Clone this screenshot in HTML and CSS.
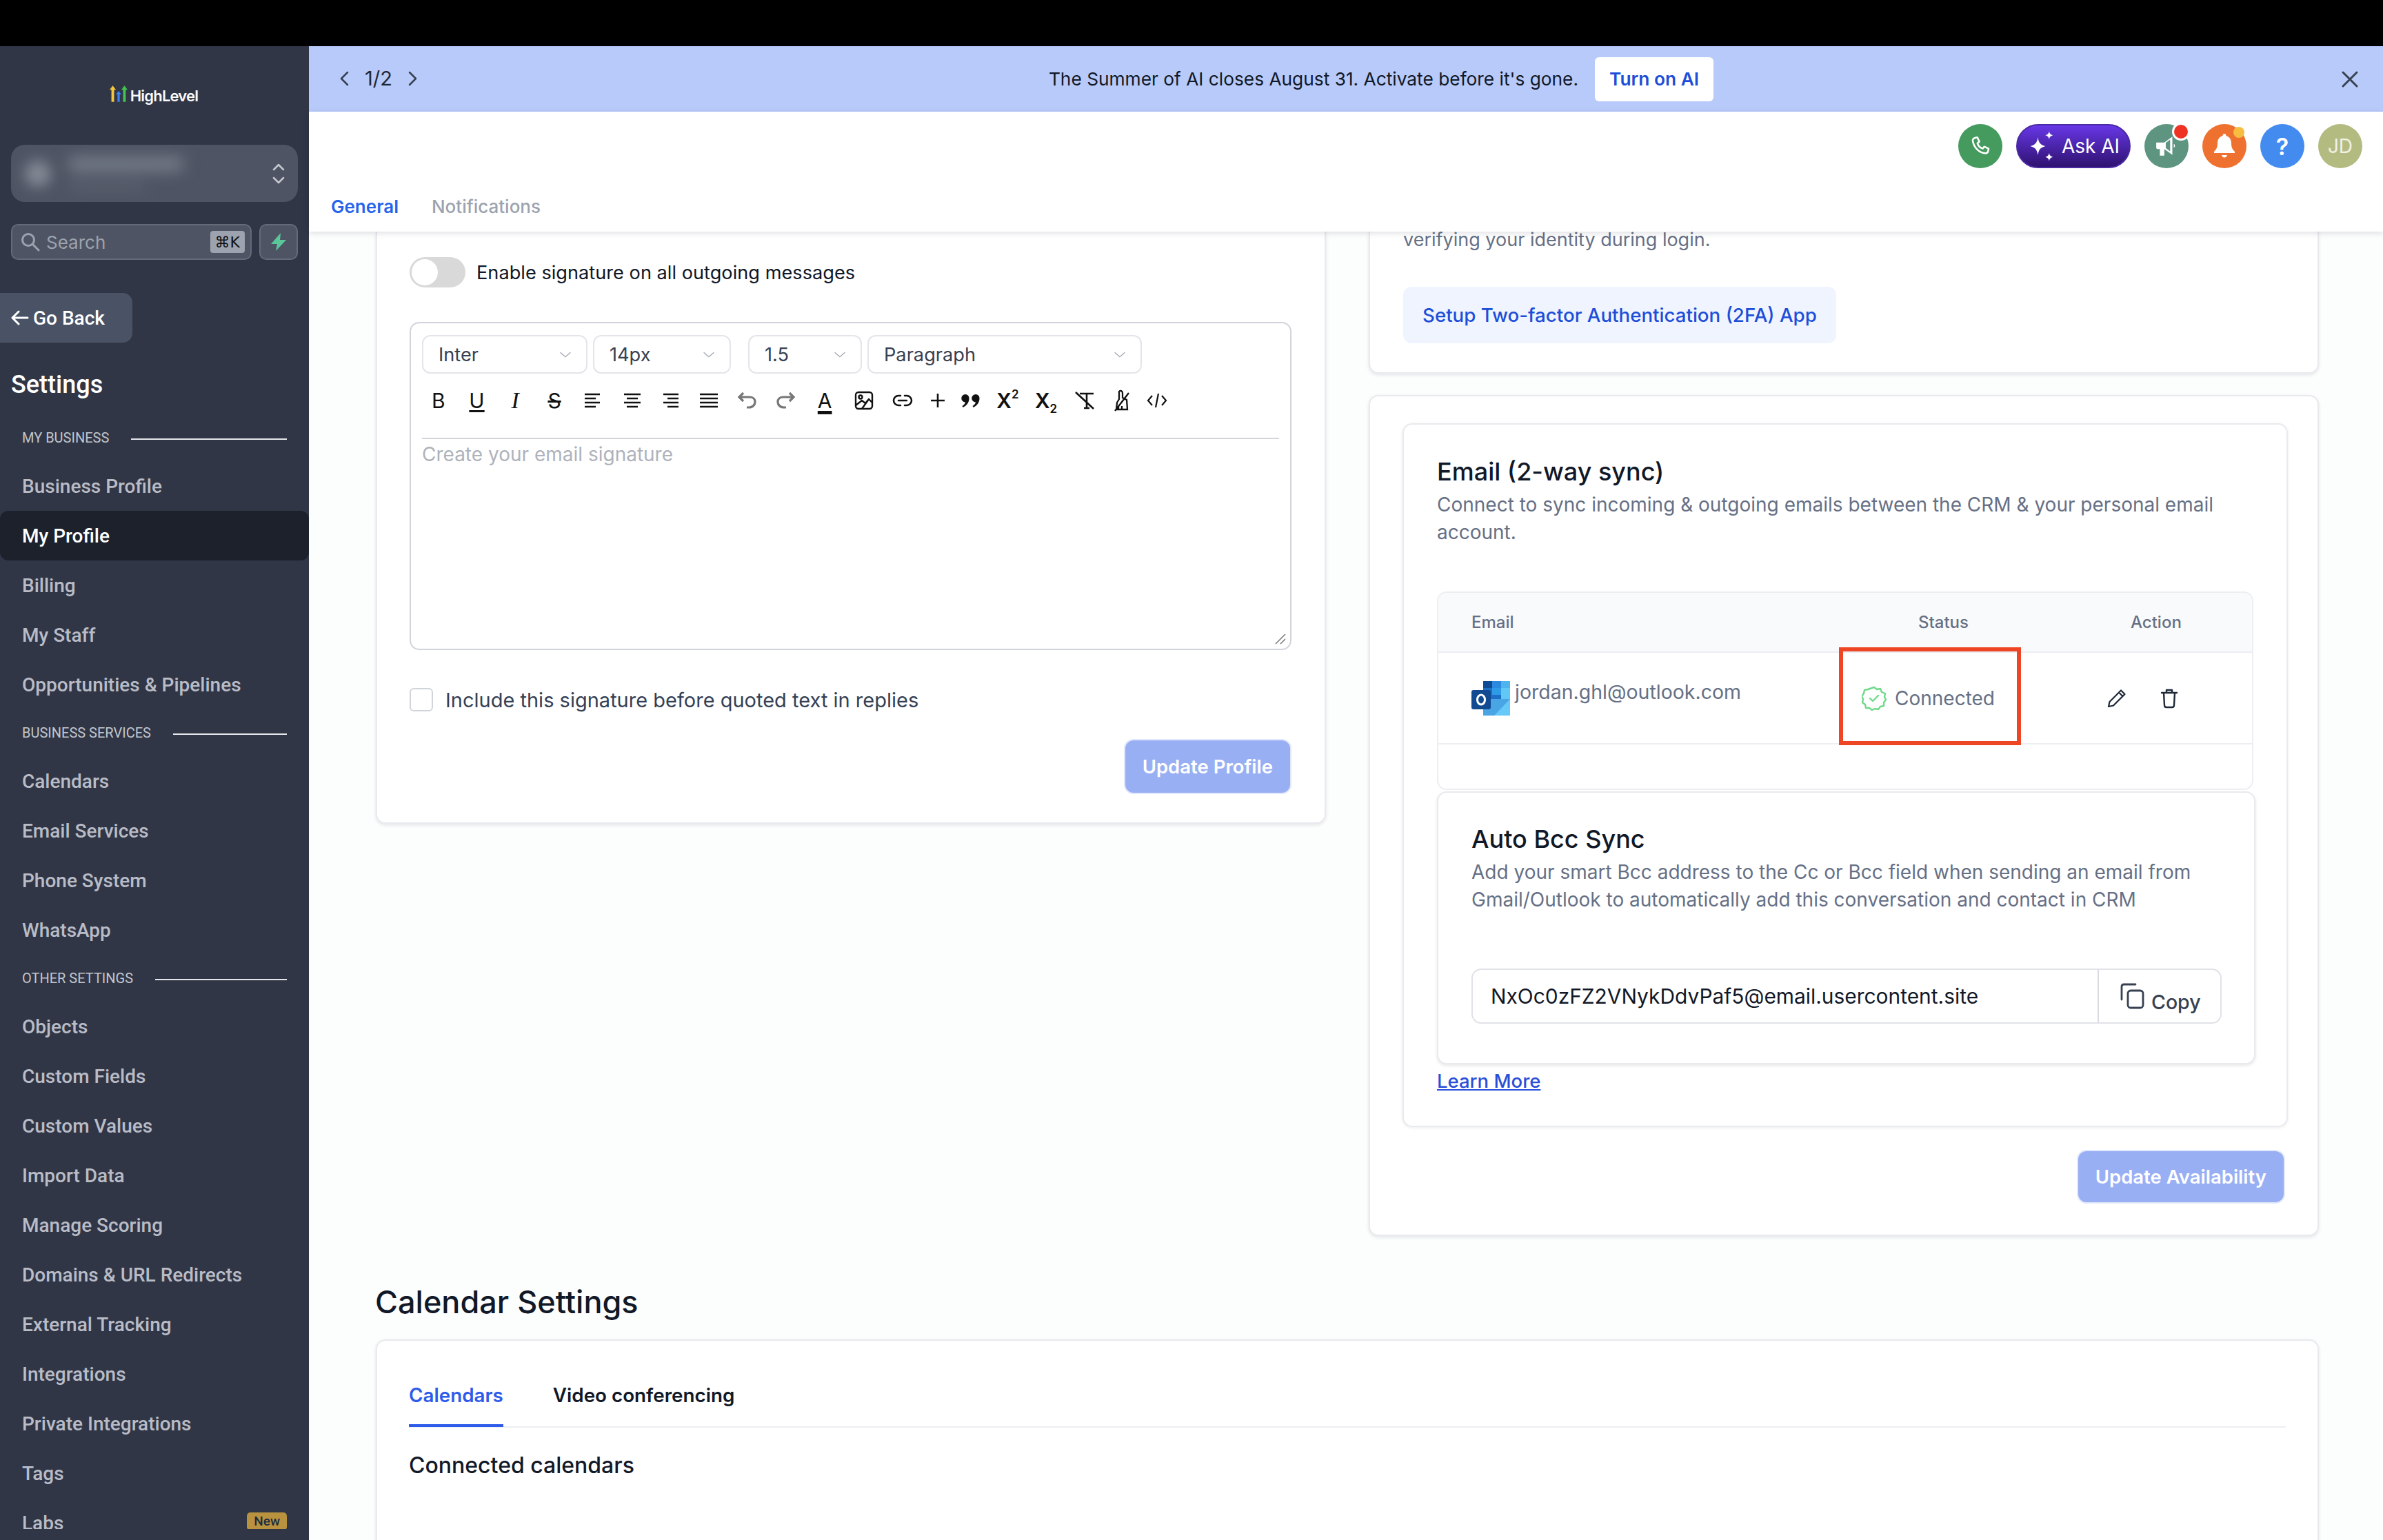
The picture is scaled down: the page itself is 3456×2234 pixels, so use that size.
FILE: index.html
```html
<!DOCTYPE html>
<html lang="en">
<head>
    <meta charset="UTF-8">
    <title>My Profile</title>
    <link rel="stylesheet" href="styles.css">
</head>
<body>
    <div class="topbar"></div>
    <div class="app">

        <!-- sidebar -->
        <aside class="sidebar">
            <div class="logo">
                <svg width="26" height="24" viewBox="0 0 40 36">
                    <path d="M7 0l7 9H10v27H4V9H0z" fill="#f5c63c"/>
                    <path d="M20 12l6 7h-3.500v17h-5V19H14z" fill="#3b82f6"/>
                    <path d="M33 0l7 9h-4v27h-6V9h-4z" fill="#43c152"/>
                </svg>
                <span>HighLevel</span>
            </div>

            <div class="account">
                <div class="account-blur">
                    <span class="blur-dot"></span>
                    <span class="blur-lines"><i></i><b></b></span>
                </div>
                <svg width="20" height="40" viewBox="0 0 20 40" fill="none" stroke="#c4c7cd" stroke-width="2.500" stroke-linecap="round" stroke-linejoin="round">
                    <path d="M3 14l7-7 7 7M3 26l7 7 7-7"/>
                </svg>
            </div>

            <div class="search-row">
                <div class="search">
                    <svg width="28" height="28" viewBox="0 0 28 28" fill="none" stroke="#9ca3af" stroke-width="3" stroke-linecap="round"><circle cx="11" cy="11" r="8.500"/><path d="M17.500 17.500L26 26"/></svg>
                    <span class="search-text">Search</span>
                    <span class="kbd">⌘K</span>
                </div>
                <div class="bolt">
                    <svg width="24" height="28" viewBox="0 0 24 28"><path d="M15 1L1 17h9l-2 10 15-16h-9z" fill="#5ac79a"/></svg>
                </div>
            </div>

            <a class="go-back">
                <svg width="26" height="24" viewBox="0 0 26 24" fill="none" stroke="#fff" stroke-width="3" stroke-linecap="round" stroke-linejoin="round"><path d="M24 12H2M11 3l-9 9 9 9"/></svg>
                Go Back
            </a>

            <h2 class="side-title">Settings</h2>

            <nav class="side-nav">
                <div class="side-label"><span>MY BUSINESS</span><i></i></div>
                <a class="side-item">Business Profile</a>
                <a class="side-item active">My Profile</a>
                <a class="side-item">Billing</a>
                <a class="side-item">My Staff</a>
                <a class="side-item">Opportunities &amp; Pipelines</a>
                <div class="side-label"><span>BUSINESS SERVICES</span><i></i></div>
                <a class="side-item">Calendars</a>
                <a class="side-item">Email Services</a>
                <a class="side-item">Phone System</a>
                <a class="side-item">WhatsApp</a>
                <div class="side-label"><span>OTHER SETTINGS</span><i></i></div>
                <a class="side-item">Objects</a>
                <a class="side-item">Custom Fields</a>
                <a class="side-item">Custom Values</a>
                <a class="side-item">Import Data</a>
                <a class="side-item">Manage Scoring</a>
                <a class="side-item">Domains &amp; URL Redirects</a>
                <a class="side-item">External Tracking</a>
                <a class="side-item">Integrations</a>
                <a class="side-item">Private Integrations</a>
                <a class="side-item">Tags</a>
                <a class="side-item">Labs <span class="new-tag">New</span></a>
            </nav>
        </aside>

        <main class="main">
            <!-- promo banner -->
            <div class="banner">
                <div class="pager">
                    <svg width="16" height="24" viewBox="0 0 16 24" fill="none" stroke="#374151" stroke-width="2.500" stroke-linecap="round" stroke-linejoin="round"><path d="M12 3l-9 9 9 9"/></svg>
                    <span>1/2</span>
                    <svg width="16" height="24" viewBox="0 0 16 24" fill="none" stroke="#374151" stroke-width="2.500" stroke-linecap="round" stroke-linejoin="round"><path d="M4 3l9 9-9 9"/></svg>
                </div>
                <div class="banner-msg">
                    <span>The Summer of AI closes August 31. Activate before it's gone.</span>
                    <a class="banner-btn">Turn on AI</a>
                </div>
                <svg class="banner-close" width="26" height="26" viewBox="0 0 26 26" fill="none" stroke="#374151" stroke-width="3" stroke-linecap="round"><path d="M3 3l20 20M23 3L3 23"/></svg>
            </div>

            <!-- header -->
            <header class="header">
                <div class="actions">
                    <span class="round phone">
                        <svg width="34" height="34" viewBox="0 0 24 24" fill="none" stroke="#fff" stroke-width="1.800" stroke-linecap="round" stroke-linejoin="round"><path d="M6.500 3.500l2.500-.5 2 4.500-2 1.500c.8 2.500 3 4.700 5.500 5.500l1.500-2 4.500 2-.5 2.500c-.3 1.500-1.500 2.500-3 2.300C10.500 18.500 5.500 13.500 4.200 6.500c-.2-1.500 1-2.700 2.300-3z"/></svg>
                    </span>
                    <a class="ask-ai">
                        <svg width="44" height="48" viewBox="0 0 40 44" fill="#fff"><path d="M14 10c1 7 3 10 10 12-7 2-9 5-10 12-1-7-3-10-10-12 7-2 9-5 10-12z"/><path d="M29 2c.5 3 1.500 4.500 5 5.500-3.500 1-4.500 2.500-5 5.500-.5-3-1.500-4.500-5-5.500 3.500-1 4.500-2.500 5-5.500zM29 31c.5 3 1.500 4.500 5 5.500-3.500 1-4.500 2.500-5 5.500-.5-3-1.500-4.500-5-5.500 3.500-1 4.500-2.500 5-5.500z"/></svg>
                        Ask AI
                    </a>
                    <span class="round megaphone">
                        <svg width="34" height="34" viewBox="0 0 32 32" fill="#fff"><path d="M2 11h11l11-8v25l-4-3-7-5v9H7v-9H4c-1 0-2-1-2-2z" /><path d="M26 13c2 .5 2 5 0 5z"/><path d="M15 11.500l6-4.500v16l-6-4.500z" fill="#5d9580"/></svg>
                        <i class="dot-red"></i>
                    </span>
                    <span class="round bell">
                        <svg width="34" height="38" viewBox="0 0 34 38" fill="#fff"><path d="M17 1c1.500 0 2.500 1 2.500 3C25 5.500 27 10 27 15c0 6 2 9 5 12v2H2v-2c3-3 5-6 5-12 0-5 2-9.500 7.500-11C14.500 2 15.500 1 17 1z"/><path d="M13 32h8c-.5 2-2 3.500-4 3.500S13.500 34 13 32z"/></svg>
                        <i class="dot-yellow"></i>
                    </span>
                    <span class="round help">?</span>
                    <span class="round avatar">JD</span>
                </div>
                <div class="page-tabs">
                    <a class="page-tab on">General</a>
                    <a class="page-tab">Notifications</a>
                </div>
            </header>

            <div class="content">
                <div class="columns">

                    <!-- signature -->
                    <section class="card card-cut sig-card">
                        <div class="toggle-row">
                            <span class="toggle"><i></i></span>
                            <span>Enable signature on all outgoing messages</span>
                        </div>

                        <div class="editor">
                            <div class="selects">
                                <div class="sel w-font">Inter<svg width="18" height="11" viewBox="0 0 22 12" fill="none" stroke="#9ca3af" stroke-width="1.500"><path d="M2 2l9 8 9-8"/></svg></div>
                                <div class="sel w-size">14px<svg width="18" height="11" viewBox="0 0 22 12" fill="none" stroke="#9ca3af" stroke-width="1.500"><path d="M2 2l9 8 9-8"/></svg></div>
                                <div class="sel w-line">1.5<svg width="18" height="11" viewBox="0 0 22 12" fill="none" stroke="#9ca3af" stroke-width="1.500"><path d="M2 2l9 8 9-8"/></svg></div>
                                <div class="sel w-para">Paragraph<svg width="18" height="11" viewBox="0 0 22 12" fill="none" stroke="#9ca3af" stroke-width="1.500"><path d="M2 2l9 8 9-8"/></svg></div>
                            </div>

                            <div class="toolbar">
                                <span class="tool t-b">B</span>
                                <span class="tool t-u">U</span>
                                <span class="tool t-i">I</span>
                                <span class="tool t-s">S</span>
                                <span class="tool"><svg width="28" height="24" viewBox="0 0 28 24" stroke="#111" stroke-width="2.500"><path d="M1 3h22M1 9h16M1 15h22M1 21h16"/></svg></span>
                                <span class="tool"><svg width="28" height="24" viewBox="0 0 28 24" stroke="#111" stroke-width="2.500"><path d="M2 3h24M6 9h16M2 15h24M6 21h16"/></svg></span>
                                <span class="tool"><svg width="28" height="24" viewBox="0 0 28 24" stroke="#111" stroke-width="2.500"><path d="M4 3h22M10 9h16M4 15h22M10 21h16"/></svg></span>
                                <span class="tool"><svg width="28" height="24" viewBox="0 0 28 24" stroke="#111" stroke-width="2.500"><path d="M1 3h26M1 9h26M1 15h26M1 21h26"/></svg></span>
                                <span class="tool"><svg width="30" height="28" viewBox="0 0 30 28" fill="none" stroke="#777" stroke-width="3.200"><path d="M9 3L3 9l6 6"/><path d="M3 9h15c5 0 8 3 8 7s-3 8-9 8h-3"/></svg></span>
                                <span class="tool"><svg width="30" height="28" viewBox="0 0 30 28" fill="none" stroke="#777" stroke-width="3.200"><path d="M21 3l6 6-6 6"/><path d="M27 9H12c-5 0-8 3-8 7s3 8 9 8h3"/></svg></span>
                                <span class="tool t-a">A</span>
                                <span class="tool"><svg width="28" height="28" viewBox="0 0 28 28" fill="none" stroke="#111" stroke-width="2.400" stroke-linejoin="round"><rect x="2" y="2" width="24" height="24" rx="4"/><circle cx="9" cy="9" r="2.500"/><path d="M2 21l9-7 5 4 5-6 5 5M11 26l10-14"/></svg></span>
                                <span class="tool"><svg width="30" height="20" viewBox="0 0 30 20" fill="none" stroke="#111" stroke-width="2.600" stroke-linecap="round"><path d="M12 3H9a7 7 0 000 14h3M18 3h3a7 7 0 010 14h-3M9 10h12"/></svg></span>
                                <span class="tool t-plus"><svg width="24" height="24" viewBox="0 0 24 24" stroke="#111" stroke-width="2.600"><path d="M12 2v20M2 12h20"/></svg></span>
                                <span class="tool t-quote"><svg width="28" height="22" viewBox="0 0 28 22" fill="#111"><path d="M6 2a5.500 5.500 0 015.500 6c0 6-4 11-9 13l-1-2c2-1 4-3 4.500-5.500A5.500 5.500 0 016 2zM21 2a5.500 5.500 0 015.500 6c0 6-4 11-9 13l-1-2c2-1 4-3 4.500-5.500A5.500 5.500 0 0121 2z"/></svg></span>
                                <span class="tool t-x">X<sup>2</sup></span>
                                <span class="tool t-x">X<sub>2</sub></span>
                                <span class="tool"><svg width="30" height="28" viewBox="0 0 30 28" fill="none" stroke="#111" stroke-width="2.600"><path d="M8 4h20M18 4v20M14 25h8M2 2l26 24"/></svg></span>
                                <span class="tool t-paint"><svg width="28" height="32" viewBox="0 0 28 32" fill="none" stroke="#111" stroke-width="2.300"><path d="M11 3c2-2 5-1 5 2v7l6 3 1 14H7l1-10 3-5zM5 31L25 5M10 29v-5M15 29v-5"/></svg></span>
                                <span class="tool"><svg width="30" height="24" viewBox="0 0 30 24" fill="none" stroke="#111" stroke-width="2.200"><path d="M8 5l-6 7 6 7M22 5l6 7-6 7M17 2l-4 20"/></svg></span>
                            </div>

                            <div class="editor-area">Create your email signature</div>
                            <svg class="resizer" width="18" height="18" viewBox="0 0 18 18" stroke="#777" stroke-width="1.500"><path d="M3 17L17 3M10 17l7-7"/></svg>
                        </div>

                        <div class="check-row">
                            <span class="checkbox"></span>
                            <span>Include this signature before quoted text in replies</span>
                        </div>

                        <div class="btn-row">
                            <a class="btn-primary">Update Profile</a>
                        </div>
                    </section>

                    <div class="right-col">
                        <!-- 2fa -->
                        <section class="card card-cut tfa-card">
                            <p class="tfa-text">verifying your identity during login.</p>
                            <a class="btn-soft">Setup Two-factor Authentication (2FA) App</a>
                        </section>

                        <!-- email sync -->
                        <section class="card sync-card">
                            <div class="inner-card">
                                <h3 class="sub-title">Email (2-way sync)</h3>
                                <p class="sub-text">Connect to sync incoming &amp; outgoing emails between the CRM &amp; your personal email account.</p>

                                <div class="mail-table">
                                    <div class="mail-head">
                                        <span class="col-email">Email</span>
                                        <span class="col-status">Status</span>
                                        <span class="col-action">Action</span>
                                    </div>
                                    <div class="mail-row">
                                        <div class="col-email cell-email">
                                            <svg width="56" height="50" viewBox="0 0 56 50">
                                                <path d="M17 0h39v28H17z" fill="#1b6fc7"/>
                                                <path d="M17 0h13v10H17z" fill="#0f4a94"/>
                                                <path d="M30 0h13v10H30z" fill="#2b8ae0"/>
                                                <path d="M43 0h13v10H43z" fill="#4fb3ee"/>
                                                <path d="M30 10h13v10H30z" fill="#2f9be6"/>
                                                <path d="M43 10h13v18H43z" fill="#61c8f5"/>
                                                <path d="M17 26h39v24H17z" fill="#4aa5e4"/>
                                                <path d="M33 50l23-24v24z" fill="#66c9f8"/>
                                                <rect y="13" width="28" height="28" rx="3" fill="#124a92"/>
                                                <ellipse cx="14" cy="27" rx="5.500" ry="7" fill="none" stroke="#fff" stroke-width="3"/>
                                            </svg>
                                            <span>jordan.ghl@outlook.com</span>
                                        </div>
                                        <div class="col-status cell-status">
                                            <svg width="36" height="36" viewBox="0 0 36 36" fill="none" stroke="#6fd98a" stroke-width="2.400" stroke-linecap="round" stroke-linejoin="round"><path d="M18 2l4 3 5-1 2 5 5 2-1 5 2 4-3 4 0 5-5 1-3 4-5-1-4 2-4-3-5 0-1-5-4-3 1-5-2-4 3-4 1-5 5-1z"/><path d="M12 18l4 4 8-8"/></svg>
                                            <span>Connected</span>
                                        </div>
                                        <div class="col-action cell-action">
                                            <svg width="30" height="30" viewBox="0 0 30 30" fill="none" stroke="#1f2937" stroke-width="2.200" stroke-linejoin="round"><path d="M3 27l1.500-7L21 3.500l5.500 5.500L10 25.500zM18 6.500l5.500 5.500"/></svg>
                                            <svg width="30" height="30" viewBox="0 0 30 30" fill="none" stroke="#1f2937" stroke-width="2.400" stroke-linecap="round" stroke-linejoin="round"><path d="M4 7h22M11 7V3h8v4M7 7l1 18c0 2 1 3 3 3h8c2 0 3-1 3-3l1-18"/></svg>
                                        </div>
                                    </div>
                                    <div class="status-mark"></div>
                                </div>

                                <div class="bcc-card">
                                    <h3 class="sub-title">Auto Bcc Sync</h3>
                                    <p class="sub-text">Add your smart Bcc address to the Cc or Bcc field when sending an email from Gmail/Outlook to automatically add this conversation and contact in CRM</p>
                                    <div class="copy-input">
                                        <span class="copy-value">NxOc0zFZ2VNykDdvPaf5@email.usercontent.site</span>
                                        <a class="copy-btn">
                                            <svg width="38" height="38" viewBox="0 0 38 38" fill="none" stroke="#374151" stroke-width="2.800" stroke-linejoin="round" stroke-linecap="round"><path d="M3 24V5c0-2 1-3 3-3h17"/><rect x="12" y="11" width="22" height="25" rx="4"/></svg>
                                            <span>Copy</span>
                                        </a>
                                    </div>
                                </div>
                                <a class="learn-more">Learn More</a>
                            </div>
                            <div class="btn-row sync-btn">
                                <a class="btn-primary">Update Availability</a>
                            </div>
                        </section>
                    </div>
                </div>

                <h2 class="section-title">Calendar Settings</h2>
                <section class="card cal-card">
                    <div class="cal-tabs">
                        <a class="cal-tab on">Calendars</a>
                        <a class="cal-tab">Video conferencing</a>
                    </div>
                    <h4 class="cal-sub">Connected calendars</h4>
                </section>
            </div>
        </main>
    </div>
</body>
</html>
```

FILE: styles.css
```css
* {
    box-sizing: border-box;
}

html, body {
    height: 100%;
}

body {
    margin: 0;
    background-color: #000;
    font-family: "Inter", sans-serif;
    color: #111827;
    overflow: hidden;
}

h2, h3, h4, p {
    margin: 0;
}

.topbar {
    height: 67px;
    background-color: #000;
}

.app {
    display: flex;
    height: 2167px;
}

/* sidebar */

.sidebar {
    width: 448px;
    flex-shrink: 0;
    background-color: #303646;
    font-family: "Roboto", sans-serif;
    display: flex;
    flex-direction: column;
    padding-bottom: 16px;
    overflow: hidden;
}

.logo {
    height: 143px;
    display: flex;
    justify-content: center;
    align-items: center;
    gap: 4px;
    padding-right: 2px;
    color: #f8f9fa;
    font-family: "Inter", sans-serif;
    font-size: 22px;
    font-weight: 600;
    letter-spacing: -0.800px;
}

.logo svg {
    margin-top: -6px;
}

.account {
    margin: 0 16px;
    height: 83px;
    border-radius: 20px;
    background-color: #4e5463;
    display: flex;
    justify-content: space-between;
    align-items: center;
    padding-right: 18px;
    overflow: hidden;
}

.account-blur {
    display: flex;
    align-items: center;
    gap: 26px;
    padding-left: 20px;
}

.blur-dot {
    width: 38px;
    height: 38px;
    border-radius: 50%;
    background-color: #858b96;
    filter: blur(10px);
}

.blur-lines {
    display: flex;
    flex-direction: column;
    gap: 16px;
    filter: blur(11px);
}

.blur-lines i {
    width: 165px;
    height: 18px;
    background-color: #7d838f;
}

.blur-lines b {
    width: 110px;
    height: 12px;
    background-color: #5c6270;
}

.search-row {
    display: flex;
    gap: 11px;
    margin: 32px 16px 0;
    height: 52px;
}

.search {
    flex: 1;
    background-color: #4e5463;
    border: 2px solid #646a78;
    border-radius: 10px;
    display: flex;
    align-items: center;
    padding: 0 8px 0 12px;
    gap: 9px;
}

.search-text {
    flex: 1;
    color: #9ca3af;
    font-family: "Inter", sans-serif;
    font-size: 26px;
}

.kbd {
    background-color: #9ca3af;
    color: #111;
    border-radius: 4px;
    padding: 2px 7px;
    height: 32px;
    line-height: 29px;
    font-size: 22px;
    font-family: "DejaVu Sans", sans-serif;
}

.bolt {
    width: 56px;
    background-color: #4e5463;
    border: 2px solid #646a78;
    border-radius: 10px;
    display: flex;
    justify-content: center;
    align-items: center;
}

.go-back {
    margin-top: 48px;
    width: 192px;
    height: 72px;
    background-color: #4a5366;
    border-radius: 0 14px 14px 0;
    display: flex;
    align-items: center;
    gap: 6px;
    padding-left: 16px;
    color: #fff;
    font-size: 28px;
    font-weight: 500;
}

.side-title {
    margin: 39px 16px 0;
    height: 44px;
    line-height: 44px;
    color: #fff;
    font-size: 36px;
    font-weight: 500;
}

.side-nav {
    flex: 1;
    overflow: hidden;
    margin-top: 21px;
}

.side-label {
    height: 68px;
    display: flex;
    align-items: center;
    gap: 32px;
    padding: 0 32px;
    color: #c3c6ce;
    font-size: 20px;
    white-space: nowrap;
}

.side-label i {
    flex: 1;
    height: 2px;
    margin-top: 3px;
    background-color: #e5e7eb;
}

.side-item {
    height: 72px;
    display: flex;
    align-items: center;
    justify-content: space-between;
    padding: 0 32px;
    color: #b9bcc6;
    font-size: 28px;
    font-weight: 500;
}

.side-item.active {
    background-color: #1c212c;
    border-radius: 12px;
    color: #fff;
}

.new-tag {
    background-color: #b8923e;
    border-radius: 5px;
    color: #1d2b3f;
    font-size: 19px;
    padding: 2px 10px;
    line-height: 22px;
    margin-top: -4px;
}

/* main */

.main {
    flex: 1;
    min-width: 0;
    display: flex;
    flex-direction: column;
    background-color: #fcfdfd;
}

.banner {
    height: 95px;
    flex-shrink: 0;
    background-color: #b7caf9;
    position: relative;
    display: flex;
    align-items: center;
    justify-content: center;
    font-size: 26.300px;
}

.pager {
    position: absolute;
    left: 44px;
    top: 35px;
    display: flex;
    align-items: center;
    gap: 21px;
    color: #1f2937;
    line-height: 24px;
    font-size: 29px;
}

.banner-msg {
    display: flex;
    align-items: center;
    gap: 24px;
    color: #111827;
    margin-left: 102px;
}

.banner-btn {
    background-color: #fff;
    color: #1d4ed8;
    font-weight: 600;
    height: 64px;
    line-height: 64px;
    padding: 0 21px;
    border-radius: 6px;
}

.banner-close {
    position: absolute;
    right: 35px;
    top: 35px;
}

.header {
    height: 174px;
    flex-shrink: 0;
    background-color: #fff;
    box-shadow: 0 2px 8px rgba(17, 24, 39, 0.14);
    position: relative;
    z-index: 2;
    display: flex;
    flex-direction: column;
    justify-content: space-between;
}

.actions {
    display: flex;
    justify-content: flex-end;
    gap: 20px;
    padding: 18px 30px 0 0;
}

.round {
    width: 64px;
    height: 64px;
    border-radius: 50%;
    display: flex;
    justify-content: center;
    align-items: center;
    color: #fff;
    position: relative;
    font-size: 30px;
}

.phone {
    background-color: #459a5e;
}

.megaphone {
    background-color: #5d9580;
}

.bell {
    background-color: #ef7130;
}

.help {
    background-color: #448bf0;
    font-weight: 600;
    font-size: 34px;
}

.avatar {
    background-color: #b4bb81;
    font-size: 28px;
    color: #f1f2e4;
}

.dot-red {
    position: absolute;
    top: -2px;
    right: -2px;
    width: 26px;
    height: 26px;
    border-radius: 50%;
    background-color: #ee3324;
    border: 3px solid #fff;
}

.dot-yellow {
    position: absolute;
    top: 4px;
    right: 3px;
    width: 16px;
    height: 16px;
    border-radius: 50%;
    background-color: #f6bd41;
}

.ask-ai {
    width: 166px;
    height: 64px;
    border-radius: 32px;
    border: 2px solid #4a2aa5;
    background: linear-gradient(#6737e6, #2f1270);
    color: #fff;
    display: flex;
    align-items: center;
    justify-content: center;
    gap: 6px;
    font-size: 28px;
}

.page-tabs {
    display: flex;
    gap: 48px;
    padding: 0 0 16px 32px;
    font-size: 26px;
    font-weight: 500;
    line-height: 40px;
}

.page-tab {
    color: #9ca3af;
}

.page-tab.on {
    color: #2563eb;
    font-weight: 600;
}

.content {
    flex: 1;
    min-height: 0;
    overflow: hidden;
    padding: 0 93px 0 97px;
}

.columns {
    display: grid;
    grid-template-columns: 1378px 1378px;
    gap: 62px;
    align-items: start;
}

.card {
    background-color: #fff;
    border: 2px solid #e8eaee;
    border-radius: 14px;
    box-shadow: 0 2px 5px rgba(17, 24, 39, 0.1);
}

.card-cut {
    border-top: 0;
    border-top-left-radius: 0;
    border-top-right-radius: 0;
}

/* signature card */

.sig-card {
    padding: 37px 48px 41px 47px;
}

.toggle-row {
    display: flex;
    align-items: center;
    gap: 16px;
    font-size: 27.200px;
    color: #111827;
    height: 44px;
}

.toggle {
    width: 81px;
    height: 44px;
    border-radius: 22px;
    background-color: #d9d9d9;
    padding: 3px;
}

.toggle i {
    display: block;
    width: 38px;
    height: 38px;
    border-radius: 50%;
    background-color: #fff;
}

.editor {
    margin-top: 50px;
    height: 476px;
    border: 2px solid #d1d5db;
    border-radius: 14px;
    padding: 17px 16px;
    position: relative;
    display: flex;
    flex-direction: column;
}

.selects {
    display: flex;
    gap: 8px;
}

.sel {
    height: 56px;
    border: 2px solid #e3e5ea;
    border-radius: 12px;
    display: flex;
    align-items: center;
    justify-content: space-between;
    padding: 0 21px 0 22px;
    font-size: 27.200px;
    color: #374151;
}

.w-font {
    width: 240px;
}

.w-size {
    width: 200px;
}

.w-line {
    width: 165px;
    margin-left: 17px;
}

.w-para {
    width: 398px;
}

.toolbar {
    display: flex;
    align-items: center;
    margin-top: 15px;
    height: 48px;
    margin-left: -4px;
}

.tool {
    width: 55.700px;
    flex-shrink: 0;
    text-align: center;
    display: flex;
    justify-content: center;
    align-items: center;
    font-size: 30px;
    color: #111;
    line-height: 1;
}

.t-plus {
    width: 46px;
}

.t-quote {
    width: 51px;
}

.t-paint {
    width: 50px;
}

.t-u {
    text-decoration: underline;
    text-underline-offset: 3px;
}

.t-i {
    font-style: italic;
    font-family: "Liberation Serif", serif;
    font-size: 34px;
}

.t-s {
    width: 58px;
    text-decoration: line-through;
}

.t-a {
    width: 58px;
    text-decoration: underline 5px;
    text-underline-offset: 4px;
    font-weight: 400;
}

.t-x {
    display: block;
    font-weight: 600;
}

.t-x sup, .t-x sub {
    font-size: 17px;
    line-height: 0;
}

.t-x sup {
    vertical-align: 14px;
}

.t-x sub {
    vertical-align: -7px;
}

.editor-area {
    margin-top: 30px;
    border-top: 2px solid #d1d5db;
    padding-top: 2px;
    font-size: 28px;
    line-height: 40px;
    color: #aeb3bb;
}

.resizer {
    position: absolute;
    right: 6px;
    bottom: 6px;
}

.check-row {
    margin-top: 55px;
    display: flex;
    align-items: center;
    gap: 18px;
    font-size: 29px;
    color: #344054;
    height: 34px;
}

.checkbox {
    width: 34px;
    height: 34px;
    border: 2px solid #d1d5db;
    border-radius: 6px;
    background-color: #fff;
}

.btn-row {
    display: flex;
    justify-content: flex-end;
    margin-top: 40px;
}

.btn-primary {
    height: 80px;
    line-height: 76px;
    padding: 0 25px;
    border-radius: 14px;
    border: 2px solid #e2e8fc;
    background-color: #99aff3;
    color: #fff;
    font-size: 27.500px;
    font-weight: 600;
}

/* right column */

.tfa-card {
    padding: 0 48px 42px;
}

.right-col {
    display: flex;
    flex-direction: column;
    gap: 31px;
}

.tfa-text {
    margin-top: -8px;
    font-size: 27px;
    line-height: 40px;
    color: #667085;
}

.btn-soft {
    display: inline-block;
    margin-top: 48px;
    height: 82px;
    line-height: 82px;
    padding: 0 28px;
    border-radius: 12px;
    background-color: #eff4ff;
    color: #1d4ed8;
    font-size: 27.700px;
    font-weight: 500;
}

.sync-card {
    padding: 39px 43px 45px 47px;
}

.inner-card {
    width: 1284px;
    height: 1021px;
    border: 2px solid #e8eaee;
    border-radius: 14px;
    box-shadow: 0 1px 4px rgba(17, 24, 39, 0.08);
    padding: 46px 48px;
}

.sub-title {
    font-size: 36px;
    line-height: 44px;
    font-weight: 500;
    color: #111827;
}

.sub-text {
    margin-top: 6px;
    font-size: 28px;
    line-height: 40px;
    color: #667085;
}

.mail-table {
    margin-top: 66px;
    width: 1184px;
    height: 288px;
    border: 2px solid #eceef2;
    border-radius: 14px;
    position: relative;
    overflow: visible;
}

.mail-head, .mail-row {
    display: grid;
    grid-template-columns: 585px 359px 1fr;
}

.mail-head {
    height: 87px;
    align-items: center;
    background-color: #f9fafb;
    border-bottom: 2px solid #eceef2;
    border-radius: 12px 12px 0 0;
    font-size: 24px;
    font-weight: 500;
    color: #667085;
}

.mail-head .col-email {
    padding-left: 48px;
}

.mail-head .col-status {
    padding-left: 111px;
}

.mail-head .col-action {
    padding-left: 60px;
}

.mail-row {
    height: 133px;
    align-items: center;
    border-bottom: 2px solid #eceef2;
    font-size: 28.500px;
    color: #667085;
}

.cell-email {
    padding-left: 48px;
    display: flex;
    align-items: center;
    gap: 7px;
}

.cell-email span {
    margin-bottom: 18px;
}

.cell-status {
    padding-left: 29px;
    display: flex;
    align-items: center;
    gap: 12px;
    font-size: 28px;
}

.cell-action {
    padding-left: 25px;
    display: flex;
    gap: 46px;
}

/* red highlight drawn on the screenshot */
.status-mark {
    position: absolute;
    left: 581px;
    top: 79px;
    width: 264px;
    height: 142px;
    border: 6px solid #ee4525;
}

.bcc-card {
    width: 1187px;
    height: 396px;
    margin-top: 2px;
    background-color: #fff;
    border: 2px solid #e8eaee;
    border-radius: 14px;
    box-shadow: 0 2px 4px rgba(17, 24, 39, 0.1);
    padding: 45px 48px;
}

.copy-input {
    margin-top: 80px;
    height: 80px;
    width: 1088px;
    border: 2px solid #e0e2e7;
    border-radius: 14px;
    display: flex;
    align-items: stretch;
}

.copy-value {
    flex: 1;
    padding: 0 26px;
    display: flex;
    align-items: center;
    font-size: 29.900px;
    color: #111827;
}

.copy-btn {
    width: 178px;
    border-left: 2px solid #d9dbe0;
    display: flex;
    align-items: center;
    gap: 8px;
    padding-left: 30px;
    color: #374151;
    font-size: 28.500px;
    font-weight: 500;
}

.copy-btn span {
    margin-top: 16px;
}

.learn-more {
    display: inline-block;
    margin-top: 4px;
    line-height: 40px;
    font-size: 27.500px;
    color: #2a4fd8;
    text-decoration: underline;
    font-weight: 500;
}

.sync-btn {
    margin-top: 33px;
    padding-right: 4px;
}

.sync-btn .btn-primary {
    height: 78px;
    line-height: 74px;
}

/* calendar */

.section-title {
    margin-top: 66px;
    line-height: 60px;
    font-size: 45px;
    font-weight: 500;
    color: #111827;
    margin-left: -1px;
}

.cal-card {
    margin-top: 24px;
    height: 600px;
    padding: 0 46px;
}

.cal-tabs {
    display: flex;
    gap: 72px;
    height: 126px;
    padding-top: 62px;
    border-bottom: 2px solid #eceef2;
    font-size: 27.800px;
    font-weight: 600;
}

.cal-tab {
    height: 63px;
    color: #111827;
}

.cal-tab.on {
    color: #2e5bea;
    border-bottom: 4px solid #2e5bea;
}

.cal-sub {
    margin-top: 33px;
    font-size: 32px;
    line-height: 44px;
    font-weight: 500;
    color: #111827;
}
```
